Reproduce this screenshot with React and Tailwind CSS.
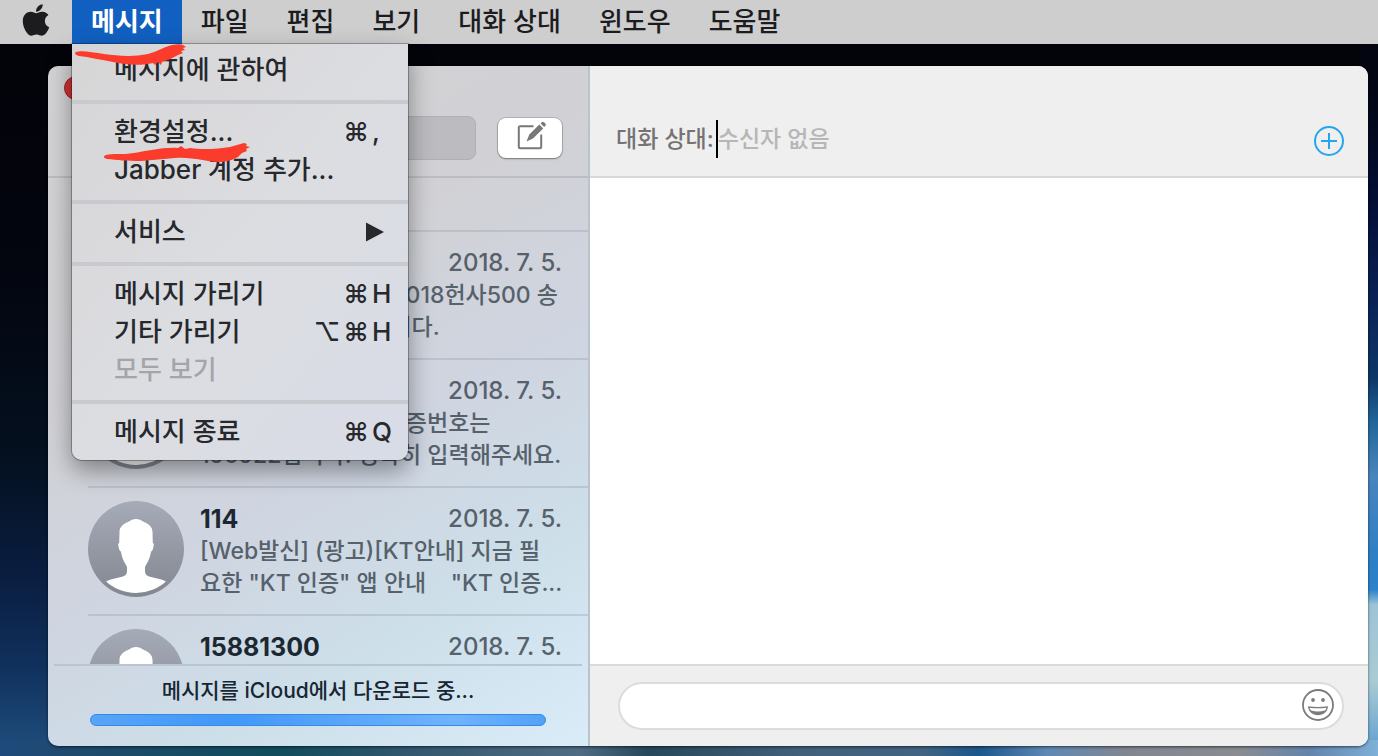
import React from "react";
import { FaApple } from "react-icons/fa";

const menus = ["파일", "편집", "보기", "대화 상대", "윈도우", "도움말"];

const menuGroups = [
  [{ label: "메시지에 관하여" }],
  [{ label: "환경설정...", mods: ["⌘"], keyName: "," }, { label: "Jabber 계정 추가..." }],
  [{ label: "서비스", submenu: true }],
  [
    { label: "메시지 가리기", mods: ["⌘"], keyName: "H" },
    { label: "기타 가리기", mods: ["⌥", "⌘"], keyName: "H" },
    { label: "모두 보기", disabled: true },
  ],
  [{ label: "메시지 종료", mods: ["⌘"], keyName: "Q" }],
];

const conversations = [
  {
    name: "15991111",
    date: "2018. 7. 5.",
    lines: ["[Web발신] 하나은, 2018헌사500 송", "금이정상완료되었습니다."],
  },
  {
    name: "15771006",
    date: "2018. 7. 5.",
    lines: ["[Web발신] 고객님 인증번호는", "196922입니다. 정확히 입력해주세요."],
  },
  {
    name: "114",
    date: "2018. 7. 5.",
    lines: ["[Web발신] (광고)[KT안내] 지금 필", "요한 \"KT 인증\" 앱 안내\u00a0\u00a0\u00a0 \"KT 인증..."],
  },
  {
    name: "15881300",
    date: "2018. 7. 5.",
    lines: [],
  },
];

function Wallpaper() {
  return (
    <svg
      className="absolute inset-0 -z-10 h-full w-full"
      viewBox="0 0 1378 756"
      preserveAspectRatio="none"
      aria-hidden="true"
    >
      <defs>
        <linearGradient id="sky" x1="0" y1="0" x2="0" y2="1">
          <stop offset="0" stopColor="#030308" />
          <stop offset="0.35" stopColor="#03050f" />
          <stop offset="0.6" stopColor="#04101f" />
          <stop offset="0.76" stopColor="#0a1d40" />
          <stop offset="0.88" stopColor="#10305c" />
          <stop offset="1" stopColor="#1f4f7e" />
        </linearGradient>
        <linearGradient id="east" x1="0" y1="0" x2="0" y2="1">
          <stop offset="0" stopColor="#030308" />
          <stop offset="0.13" stopColor="#030616" />
          <stop offset="0.27" stopColor="#040e36" />
          <stop offset="0.4" stopColor="#0a2357" />
          <stop offset="0.5" stopColor="#0e3767" />
          <stop offset="0.56" stopColor="#22679b" />
          <stop offset="0.63" stopColor="#4a84bd" />
          <stop offset="0.74" stopColor="#2d7fc6" />
          <stop offset="0.78" stopColor="#2c82cc" />
          <stop offset="0.8" stopColor="#9dc3d6" />
          <stop offset="0.9" stopColor="#a9cbd4" />
          <stop offset="1" stopColor="#5b9dd0" />
        </linearGradient>
        <linearGradient id="ground" x1="0" y1="0" x2="1" y2="0">
          <stop offset="0" stopColor="#1d4a7c" />
          <stop offset="0.06" stopColor="#1f4a6c" />
          <stop offset="0.2" stopColor="#104c5b" />
          <stop offset="0.3" stopColor="#33576e" />
          <stop offset="0.42" stopColor="#4f6c84" />
          <stop offset="0.47" stopColor="#27475a" />
          <stop offset="0.58" stopColor="#42607a" />
          <stop offset="0.67" stopColor="#426482" />
          <stop offset="0.71" stopColor="#1c568c" />
          <stop offset="0.76" stopColor="#6088b4" />
          <stop offset="0.82" stopColor="#82868f" />
          <stop offset="0.9" stopColor="#8a8c92" />
          <stop offset="0.95" stopColor="#6384ab" />
          <stop offset="1" stopColor="#7eb0d8" />
        </linearGradient>
      </defs>
      <rect width="1378" height="756" fill="url(#sky)" />
      <rect x="1360" width="18" height="756" fill="url(#east)" />
      <rect y="740" width="1378" height="16" fill="url(#ground)" />
    </svg>
  );
}

function Avatar() {
  return (
    <svg className="h-24 w-24 shrink-0" viewBox="0 0 96 96" aria-hidden="true">
      <defs>
        <linearGradient id="disc" x1="0" y1="0" x2="0" y2="1">
          <stop offset="0" stopColor="#a6abb8" />
          <stop offset="1" stopColor="#828791" />
        </linearGradient>
        <clipPath id="inner">
          <circle cx="48" cy="47" r="45" />
        </clipPath>
      </defs>
      <circle cx="48" cy="48" r="48" fill="url(#disc)" />
      <path
        clipPath="url(#inner)"
        fill="#fff"
        d="M48 18c-3 0-5 1-8 3-5 2-8.500 5-8.500 10l-.3 11c-1.200.2-1.200 1.500-.6 4 .5 2.500 1.200 4 2.300 4.500 1 5 2 8 3.600 11 .8 2 2.500 3 2.500 5v4c0 3-2 4.500-6 5.500-6 1.500-11 2-15 4.500 5 8 16 13 30 13s25-5 30-13c-4-2.500-9-3-15-4.500-4-1-6-2.500-6-5.500v-4c0-2 1.700-3 2.500-5 1.600-3 2.600-6 3.600-11 1.100-.5 1.800-2 2.300-4.500.6-2.500.6-3.800-.6-4l-.3-11c0-5-3.500-8-8.500-10-3-2-5-3-8-3z"
      />
    </svg>
  );
}

function ComposeIcon() {
  return (
    <svg className="h-8 w-8" viewBox="0 0 32 32" aria-hidden="true">
      <path
        d="M19.500 7.300H6a1.200 1.200 0 0 0-1.200 1.200v19.500a1.200 1.200 0 0 0 1.200 1.200h20a1.200 1.200 0 0 0 1.200-1.200V15.500"
        fill="none"
        stroke="#787878"
        strokeWidth="2"
      />
      <path d="M12.500 22.500l2.800-7L25.300 5.600l3.900 3.800L19 19.600z" fill="#787878" />
      <path d="M26.600 4.400l1.100-1.200c.7-.7 1.600-.7 2.300 0l1.300 1.300c.7.7.7 1.600 0 2.300l-1.100 1.200z" fill="#787878" />
    </svg>
  );
}

function SmileIcon() {
  return (
    <svg className="h-8 w-8" viewBox="0 0 32 32" aria-hidden="true">
      <circle cx="16" cy="16" r="15" fill="none" stroke="#7b7b7b" strokeWidth="1.800" />
      <circle cx="11" cy="11" r="1.900" fill="#7b7b7b" />
      <circle cx="21" cy="11" r="1.900" fill="#7b7b7b" />
      <path d="M6 17.200q10 1.600 20 0c-.4 5.400-4.500 9-10 9s-9.600-3.600-10-9z" fill="#7b7b7b" />
      <path d="M7.600 18.700q8.400 1.200 16.800 0c-.2 1.400-.8 2.200-1.700 2.800-4 1.400-9.400 1.400-13.400 0-.9-.6-1.500-1.400-1.700-2.800z" fill="#fff" />
    </svg>
  );
}

function MenuItem({ label, mods, keyName, submenu, disabled }) {
  return (
    <button
      role="menuitem"
      disabled={disabled}
      className="flex h-[38px] w-full items-center pr-4 pb-[2px] pl-[42px] text-left text-[#26282c] disabled:text-[#a3a5ab]"
    >
      <span className="flex-1">{label}</span>
      {mods && (
        <span className="flex gap-[3px]">
          {mods.map((m) => (
            <span key={m}>{m}</span>
          ))}
        </span>
      )}
      {keyName && <span className="ml-[3px] w-5">{keyName}</span>}
      {submenu && (
        <svg className="mr-2 h-5 w-[18px]" viewBox="0 0 18 20" aria-hidden="true">
          <path d="M0 0.500L18 10L0 19.500z" fill="#26282c" />
        </svg>
      )}
    </button>
  );
}

function AppMenu() {
  return (
    <div
      role="menu"
      className="absolute top-full left-0 w-[336px] rounded-b-[10px] bg-linear-to-br from-[#d6d5d6] via-[#dcdde1] to-[#d8dce7] py-2 whitespace-nowrap shadow-[0_0_0_1px_rgba(0,0,0,0.28),0_10px_24px_rgba(0,0,0,0.4)]"
    >
      {menuGroups.map((group, i) => (
        <React.Fragment key={i}>
          {i > 0 && <div role="separator" className="my-[10px] h-1 bg-[#c9cacf]" />}
          {group.map((item) => (
            <MenuItem key={item.label} {...item} />
          ))}
        </React.Fragment>
      ))}
      <svg
        className="pointer-events-none absolute top-0 left-0 h-[120px] w-[200px]"
        viewBox="0 0 200 120"
        aria-hidden="true"
      >
        <g fill="#fb3b2b">
          <path d="M4 8c5-2 16 0 28 2 14 2 30 3 44 0 9-2 15-7 24-9 5-1 9-1 11 0l3 2-3 1 2 2-4 1 2 2-5 2c-5 3-10 5-16 7l-1 3-3-3-3 3-2-2c-12 3-26 2-40-1-12-2-24-5-34-6-4-1-5-3-3-4z" />
          <path d="M34 111c6-2 16 0 28-2 14-2 28-6 44-5l3-2 4 3 5-1c12 2 28 1 40-1l14-4 3 1-1 2 4 1-4 2 1 2-5 2-4 4c-5 3-12 5-19 5-14 0-24-5-44-4l-34 3c-14 0-24-1-34-2-4-1-4-3-1-4z" />
        </g>
      </svg>
    </div>
  );
}

function MenuBar() {
  return (
    <nav className="relative z-20 flex h-11 shrink-0 items-stretch bg-[#cececf] text-[26px] leading-none whitespace-nowrap text-[#1c1c1e]">
      <button aria-label="Apple" className="flex w-[72px] items-center justify-center pb-1">
        <FaApple className="h-9 w-9" />
      </button>
      <div className="relative flex">
        <button className="bg-[#1160c1] px-[19px] font-bold text-white">메시지</button>
        <AppMenu />
      </div>
      {menus.map((m) => (
        <button key={m} className="px-[19px]">
          {m}
        </button>
      ))}
    </nav>
  );
}

function Sidebar() {
  return (
    <aside className="flex w-[542px] shrink-0 flex-col border-r-2 border-[#b9c3cd] bg-[linear-gradient(150deg,#d3d2d4_0%,#d1d1d5_35%,#cfd5e1_58%,#cddfe9_78%,#daecf8_100%)]">
      <header className="flex h-28 shrink-0 flex-col justify-between border-b-2 border-[#bcbcc2] pt-[10px] pb-4">
        <div className="flex gap-4 px-4">
          <button aria-label="닫기" className="h-6 w-6 rounded-full border border-[#a32022] bg-[#cb3334]" />
          <button aria-label="최소화" className="h-6 w-6 rounded-full border border-[#b98a2a] bg-[#dfa93a]" />
          <button aria-label="확대" className="h-6 w-6 rounded-full border border-[#2c8a38] bg-[#3fae4c]" />
        </div>
        <div className="flex items-center gap-[22px] pr-[26px] pl-6">
          <input
            aria-label="검색"
            className="h-11 min-w-0 flex-1 rounded-lg border border-[#aeaeb3] bg-[#bcbbc0] px-3"
          />
          <button
            aria-label="새로운 메시지"
            className="flex h-10 w-16 items-center justify-center rounded-lg bg-white pb-[6px] shadow-[0_0_0_1px_rgba(0,0,0,0.14),0_1px_2px_rgba(0,0,0,0.35)]"
          >
            <ComposeIcon />
          </button>
        </div>
      </header>
      <ul className="min-h-0 flex-1 overflow-hidden pl-10 text-[23px] leading-8">
        <li className="h-[54px] border-b-2 border-[#9aa5b0]/40" />
        {conversations.map((c) => (
          <li key={c.name} className="flex h-32 gap-4 border-b-2 border-[#9aa5b0]/40 pt-[13px] pr-[26px]">
            <Avatar />
            <div className="min-w-0 flex-1 pt-[2px] text-[#56616b]">
              <div className="flex justify-between">
                <h2 className="text-[25px] leading-8 font-bold text-[#1c2831]">{c.name}</h2>
                <time className="text-[24px] leading-8">{c.date}</time>
              </div>
              {c.lines.map((line) => (
                <p key={line} className="whitespace-nowrap">
                  {line}
                </p>
              ))}
            </div>
          </li>
        ))}
      </ul>
      <footer className="mx-[6px] h-[82px] shrink-0 border-t-2 border-[#b8c6d1] px-9 pt-[9px]">
        <p id="sync" className="text-center text-[21px] leading-8 text-[#172632]">
          메시지를 iCloud에서 다운로드 중...
        </p>
        <div
          role="progressbar"
          aria-labelledby="sync"
          className="mt-[7px] h-3 rounded-full border border-[#3b88de] bg-[linear-gradient(90deg,#57a5fa_0%,#4098f8_30%,#6fb3fd_80%,#50a2f9_100%)]"
        />
      </footer>
    </aside>
  );
}

function Conversation() {
  return (
    <main className="flex min-w-0 flex-1 flex-col bg-white text-[23px]">
      <header className="flex h-28 shrink-0 items-end border-b-2 border-[#d8d8d8] bg-[#efefef] pr-6 pb-[18px] pl-[26px]">
        <div className="flex h-[38px] flex-1 items-center">
          <label htmlFor="to" className="pr-[2px] text-[#757373]">
            대화 상대:
          </label>
          <input
            id="to"
            placeholder="수신자 없음"
            className="h-[38px] min-w-0 flex-1 border-l-2 border-black bg-transparent outline-none placeholder:text-[#b6b6b6]"
          />
          <button aria-label="추가" className="pt-1">
            <svg className="h-[30px] w-[30px]" viewBox="0 0 30 30" aria-hidden="true">
              <circle cx="15" cy="15" r="14" fill="none" stroke="#25a5f0" strokeWidth="2" />
              <path d="M15 7v16M7 15h16" stroke="#25a5f0" strokeWidth="2" />
            </svg>
          </button>
        </div>
      </header>
      <section className="flex-1" />
      <footer className="h-[82px] shrink-0 border-t-2 border-[#dadada] bg-[#efefef] pt-4 pr-6 pl-7">
        <div className="flex h-12 items-center rounded-full border-2 border-[#dcdcdc] bg-white pr-2 pb-[2px] pl-6">
          <input aria-label="메시지" className="min-w-0 flex-1 bg-transparent outline-none" />
          <button aria-label="이모티콘">
            <SmileIcon />
          </button>
        </div>
      </footer>
    </main>
  );
}

export default function App() {
  return (
    <div className="relative isolate flex h-screen flex-col overflow-hidden font-[Inter,'Noto_Sans_CJK_KR',sans-serif] font-medium">
      <Wallpaper />
      <MenuBar />
      <div className="mt-[22px] mr-[10px] mb-[10px] ml-12 flex min-h-0 flex-1 overflow-hidden rounded-[10px] shadow-[0_1px_3px_rgba(0,0,0,0.6)]">
        <Sidebar />
        <Conversation />
      </div>
    </div>
  );
}
